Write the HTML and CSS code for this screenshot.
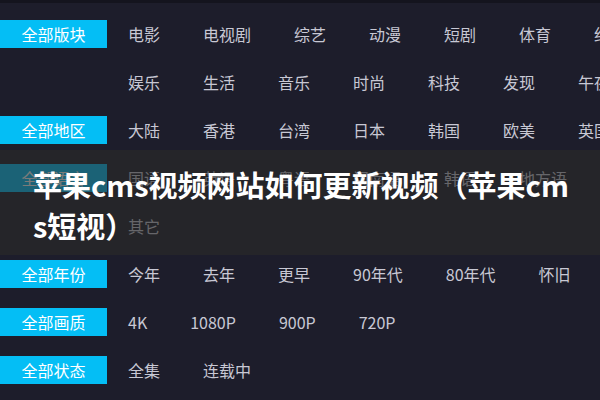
FILE: index.html
```html
<!DOCTYPE html>
<html lang="zh-CN">
<head>
<meta charset="utf-8">
<link rel="stylesheet" href="styles.css">
</head>
<body>
<div class="page">
  <div class="filters">
    <div class="line"><span class="label">全部版块</span><ul class="items"><li>电影</li><li>电视剧</li><li>综艺</li><li>动漫</li><li>短剧</li><li>体育</li><li>纪录片</li></ul></div>
    <div class="line"><span class="label empty"></span><ul class="items"><li>娱乐</li><li>生活</li><li>音乐</li><li>时尚</li><li>科技</li><li>发现</li><li>午夜</li></ul></div>
    <div class="line"><span class="label">全部地区</span><ul class="items"><li>大陆</li><li>香港</li><li>台湾</li><li>日本</li><li>韩国</li><li>欧美</li><li>英国</li></ul></div>
    <div class="line"><span class="label">全部语言</span><ul class="items"><li>国语</li><li>英语</li><li>粤语</li><li>闽南语</li><li>韩语</li><li>地方语</li></ul></div>
    <div class="line"><span class="label empty"></span><ul class="items"><li>其它</li></ul></div>
    <div class="line"><span class="label">全部年份</span><ul class="items"><li>今年</li><li>去年</li><li>更早</li><li>90年代</li><li>80年代</li><li>怀旧</li></ul></div>
    <div class="line"><span class="label">全部画质</span><ul class="items"><li>4K</li><li>1080P</li><li>900P</li><li>720P</li></ul></div>
    <div class="line"><span class="label">全部状态</span><ul class="items"><li>全集</li><li>连载中</li></ul></div>
  </div>
  <div class="banner">
    <h1 class="title">苹果cms视频网站如何更新视频（苹果cms短视）</h1>
  </div>
</div>
</body>
</html>
```
FILE: styles.css
```css
* { box-sizing: border-box; }
html, body { margin: 0; padding: 0; }
body {
  width: 600px;
  height: 400px;
  overflow: hidden;
  background: #1d1d2b;
  font-family: "Noto Sans CJK SC", "Noto Sans", sans-serif;
}
.page {
  position: relative;
  width: 600px;
  height: 400px;
  border-top: 3px solid #14141e;
  overflow: hidden;
}
.filters {
  padding-top: 7px;
  display: flex;
  flex-direction: column;
}
.line {
  height: 48px;
  display: flex;
  align-items: center;
  gap: 21px;
  white-space: nowrap;
}
.label {
  flex: 0 0 107px;
  height: 28px;
  background: #04bef5;
  color: #ffffff;
  font-size: 16px;
  line-height: 28px;
  text-align: center;
}
.label.empty { background: transparent; }
.items {
  list-style: none;
  margin: 0;
  padding: 0;
  display: flex;
  gap: 43px;
  color: #c8c8d4;
  font-size: 16px;
  line-height: 28px;
}
.banner {
  position: absolute;
  left: 0;
  top: 147px;
  width: 600px;
  height: 105px;
  background: rgba(42, 42, 40, 0.62);
  display: flex;
  align-items: center;
  padding: 4px 26px 0 33px;
}
.title {
  margin: 0;
  color: #ffffff;
  font-size: 29px;
  font-weight: 700;
  line-height: 41px;
  word-break: break-all;
}
```
